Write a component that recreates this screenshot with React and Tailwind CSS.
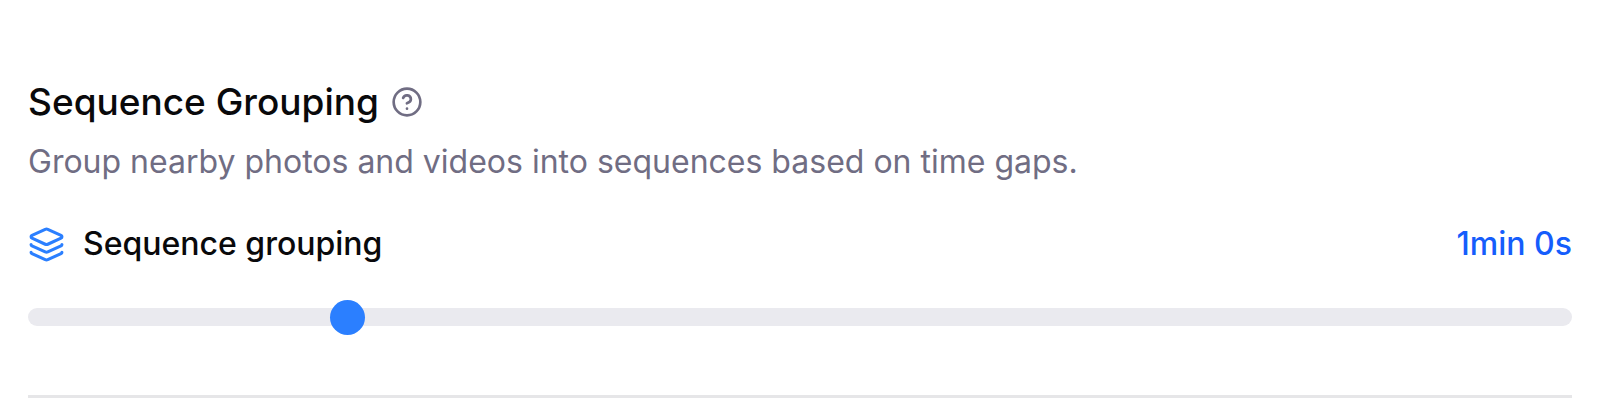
import { CircleQuestionMark, Layers } from "lucide-react";
import { useState } from "react";

const formatGap = (s) => `${Math.floor(s / 60)}min ${s % 60}s`;

export default function App() {
  const [gap, setGap] = useState(60);
  return (
    <main className="bg-white px-7 pt-20 font-['Inter',sans-serif] text-[#09090b]">
      <section className="border-b-3 border-[#e6e6e8] pb-[69px]">
        <div className="flex items-center gap-3">
          <h2 className="text-[37px] leading-11 font-medium">Sequence Grouping</h2>
          <button type="button" aria-label="About sequence grouping" className="text-[#706d83]">
            <CircleQuestionMark size={32} strokeWidth={2} />
          </button>
        </div>
        <p className="mt-4 text-[32px] leading-11 text-[#706d83]">
          Group nearby photos and videos into sequences based on time gaps.
        </p>
        <div className="mt-9 flex items-center justify-between text-[32px] leading-12 font-medium">
          <label htmlFor="gap" className="flex items-center gap-[18px]">
            <Layers size={37} className="text-[#2b7fff]" />
            Sequence grouping
          </label>
          <output htmlFor="gap" className="text-[#155dfc]">{formatGap(gap)}</output>
        </div>
        <input
          id="gap"
          type="range"
          min="0"
          max="300"
          value={gap}
          onChange={(e) => setGap(Number(e.target.value))}
          className="mt-10 block h-[18px] w-full cursor-pointer appearance-none rounded-full bg-[#eaeaef] [&::-webkit-slider-thumb]:size-[35px] [&::-webkit-slider-thumb]:appearance-none [&::-webkit-slider-thumb]:rounded-full [&::-webkit-slider-thumb]:bg-[#2b7fff]"
        />
      </section>
    </main>
  );
}
